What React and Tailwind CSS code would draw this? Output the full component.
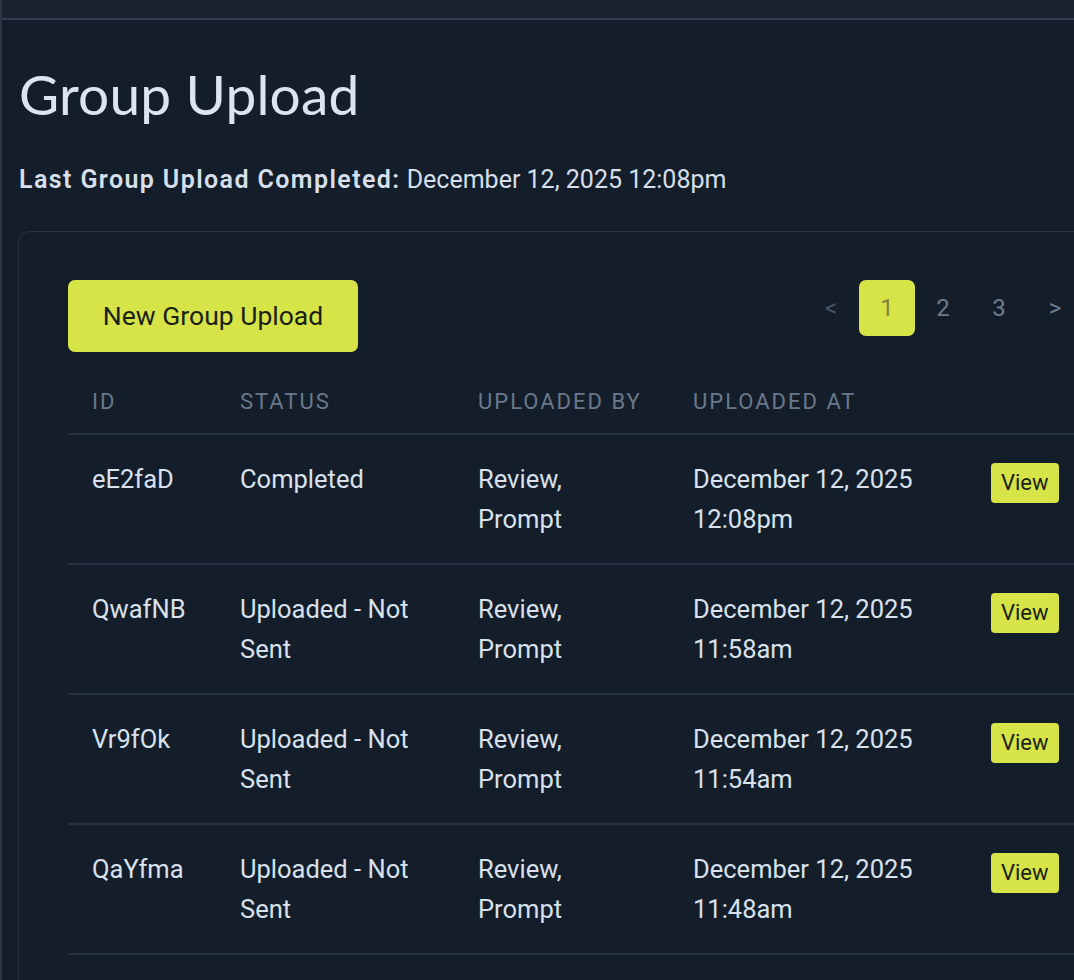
import React from "react";

const uploads = [
  { id: "eE2faD", status: "Completed", by: "Review, Prompt", date: "December 12, 2025", time: "12:08pm" },
  { id: "QwafNB", status: "Uploaded - Not Sent", by: "Review, Prompt", date: "December 12, 2025", time: "11:58am" },
  { id: "Vr9fOk", status: "Uploaded - Not Sent", by: "Review, Prompt", date: "December 12, 2025", time: "11:54am" },
  { id: "QaYfma", status: "Uploaded - Not Sent", by: "Review, Prompt", date: "December 12, 2025", time: "11:48am" },
];

const Pagination = () => {
  return (
    <div className="flex items-center text-[24px] text-[#6f7b8a]">
      <span className="w-[56px] text-center text-[#4a5563]">&lt;</span>
      <span className="w-[56px] h-[56px] flex items-center justify-center rounded-[7px] bg-[#d6e448] text-[#7d8640]">
        1
      </span>
      <span className="w-[56px] text-center">2</span>
      <span className="w-[56px] text-center">3</span>
      <span className="w-[56px] text-center">&gt;</span>
    </div>
  );
};

const App = () => {
  return (
    <div
      className="w-[1074px] h-[980px] overflow-hidden bg-[#141e2b] border-l-2 border-[#2c3644]"
      style={{ fontFamily: "Roboto, 'Liberation Sans', sans-serif" }}
    >
      <div className="h-[20px] bg-[#19232f] border-b-2 border-[#333e4c]" />
      <div className="pl-[16px]">
        <h1
          className="mt-[44px] pl-[1px] text-[55px] leading-[60px] text-[#dce5ef] tracking-[0.2px]"
          style={{ fontFamily: "Lato, 'Noto Sans', sans-serif" }}
        >
          Group Upload
        </h1>
        <p className="mt-[40px] pl-[1px] text-[25px] leading-[32px] text-[#d6dfea]">
          <span className="font-semibold tracking-[1.4px]">Last Group Upload Completed:</span> December 12, 2025 12:08pm
        </p>

        <div className="mt-[35px] w-[1100px] rounded-[12px] border border-[#273240] pl-[49px] pt-[48px] pb-10">
          <div className="flex items-center justify-between w-[1015px]">
            <button className="w-[290px] h-[72px] rounded-[7px] bg-[#d6e448] text-[26.5px] text-[#1b1f16]">
              New Group Upload
            </button>
            <div className="-mt-[16px]">
              <Pagination />
            </div>
          </div>

          <table className="mt-[21px] w-[1040px] text-left">
            <thead>
              <tr className="border-b-2 border-[#263140] text-[22px] leading-[28px] tracking-[2px] text-[#6a788a]">
                <th className="font-normal pl-[24px] w-[172px] pt-[15px] pb-[17px]">ID</th>
                <th className="font-normal w-[238px] pt-[15px] pb-[17px]">STATUS</th>
                <th className="font-normal w-[215px] pt-[15px] pb-[17px]">UPLOADED BY</th>
                <th className="font-normal w-[298px] pt-[15px] pb-[17px]">UPLOADED AT</th>
                <th />
              </tr>
            </thead>
            <tbody className="text-[25.5px] leading-[40px] text-[#d8e1ec]">
              {uploads.map((u) => (
                <tr key={u.id} className="border-b-2 border-[#263140] align-top">
                  <td className="pl-[24px] pt-[24px] pb-[24px]">{u.id}</td>
                  <td className="pt-[24px] pb-[24px]">
                    <div className="w-[190px]">{u.status}</div>
                  </td>
                  <td className="pt-[24px] pb-[24px]">
                    <div className="w-[100px]">{u.by}</div>
                  </td>
                  <td className="pt-[24px] pb-[24px]">
                    <div>{u.date}</div>
                    <div>{u.time}</div>
                  </td>
                  <td className="pt-[26px] pb-[24px]">
                    <span className="inline-flex h-[40px] px-[10px] items-center rounded-[4px] bg-[#d6e448] text-[22px] text-[#1b1f16]">
                      View
                    </span>
                  </td>
                </tr>
              ))}
            </tbody>
          </table>
        </div>
      </div>
    </div>
  );
};

export default App;
